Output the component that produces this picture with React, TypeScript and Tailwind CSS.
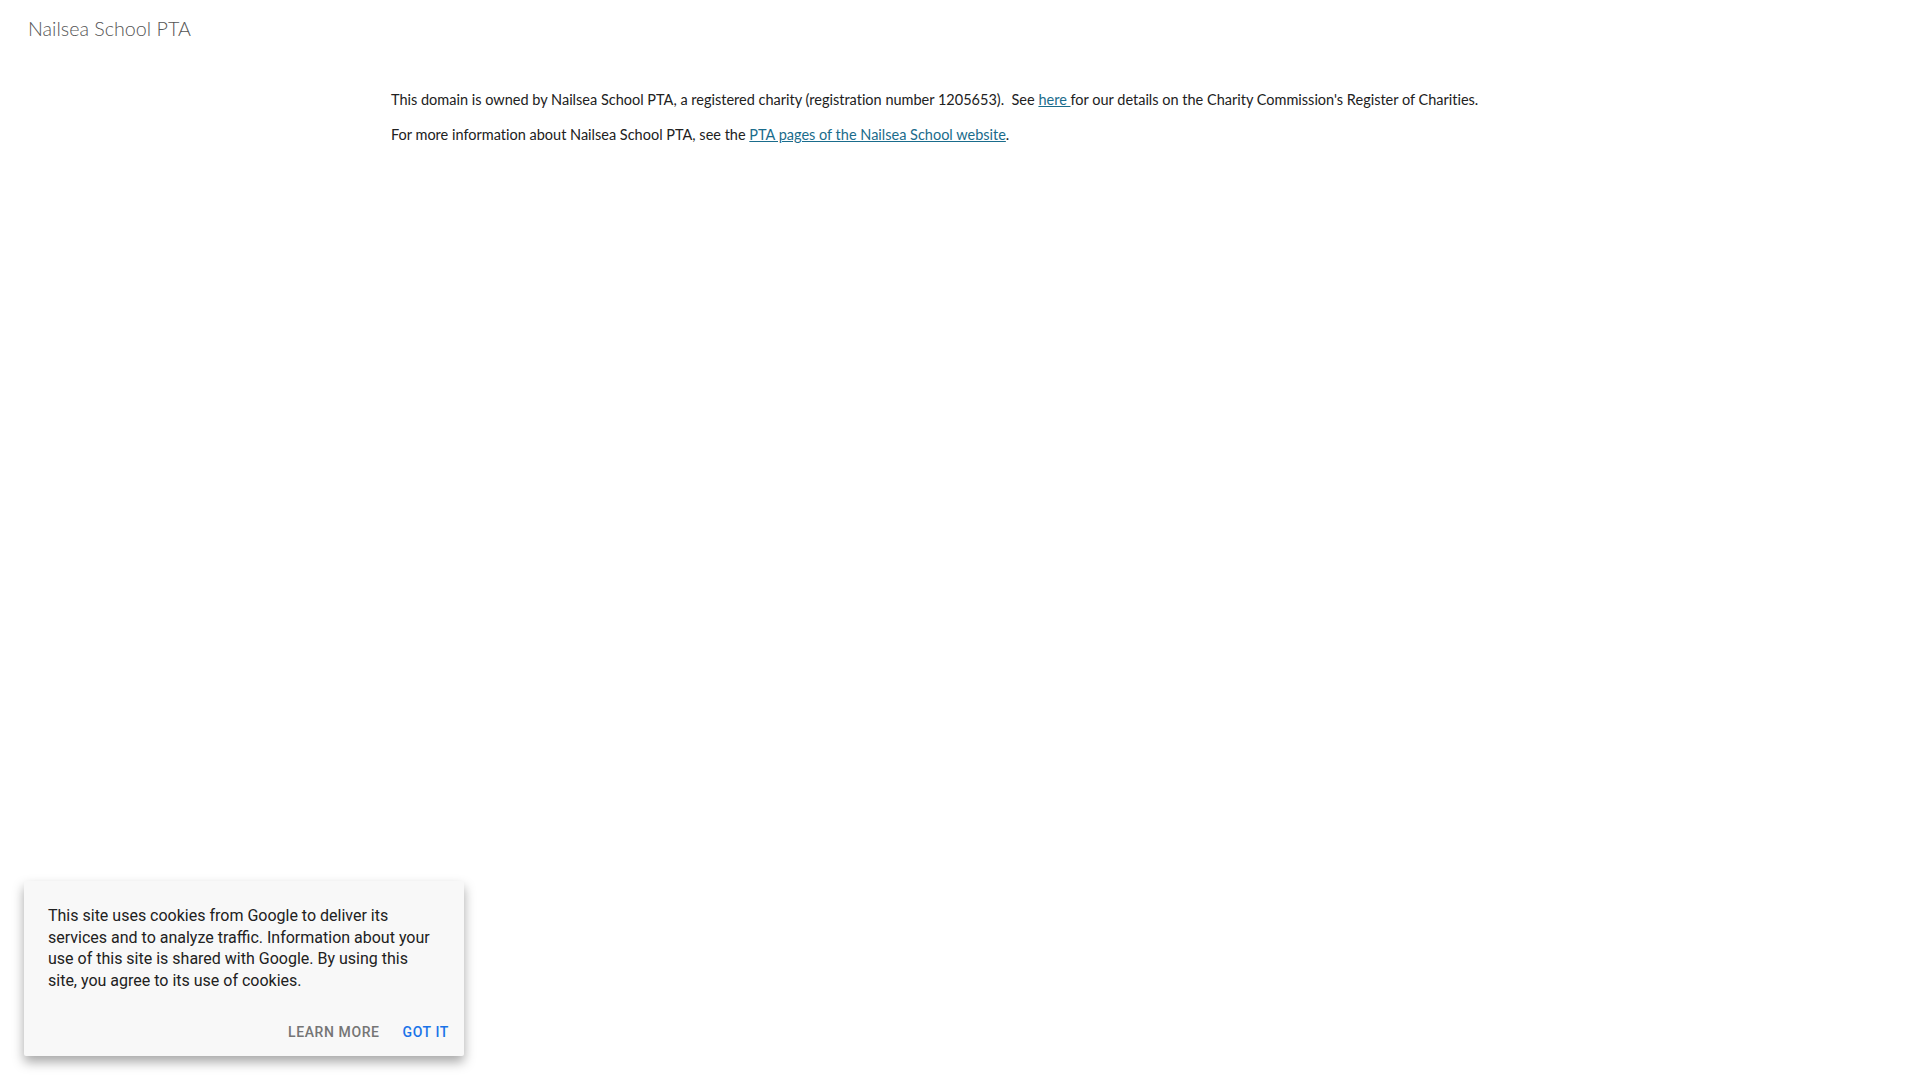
import React from "react";

export default function App() {
  return (
    <div className="relative w-[1920px] h-[1080px] bg-white overflow-hidden" style={{ fontFamily: "Lato, 'Liberation Sans', sans-serif" }}>
      <header className="h-[58px] flex items-center pl-[28px]">
        <span className="text-[19.7px] font-light text-[#555555] leading-none">Nailsea School PTA</span>
      </header>
      <main className="ml-[391px] w-[1140px] pt-[32px] text-[14.5px] leading-[20px] text-[#212121] [font-variant-ligatures:none]">
        <p className="mb-[15px]">
          This domain is owned by Nailsea School PTA, a registered charity (registration number 1205653).&nbsp; See{" "}
          <a className="text-[#1a6c8c] underline" href="#">here </a>
          for our details on the Charity Commission's Register of Charities.
        </p>
        <p>
          For more information about Nailsea School PTA, see the{" "}
          <a className="text-[#1a6c8c] underline" href="#">PTA pages of the Nailsea School website</a>.
        </p>
      </main>
      <div
        className="absolute left-[24px] bottom-[24px] w-[440px] bg-[#f8f8f8] rounded-[2px] shadow-[0_6px_12px_rgba(0,0,0,0.35)]"
        style={{ fontFamily: "Roboto, 'Liberation Sans', sans-serif" }}
      >
        <div className="px-[24px] pt-[24px] text-[16px] leading-[21.4px] text-[#212121]">
          This site uses cookies from Google to deliver its services and to analyze traffic. Information about your use of this site is shared with Google. By using this site, you agree to its use of cookies.
        </div>
        <div className="flex justify-end items-center gap-[23px] pr-[15px] pt-[31px] pb-[13px]">
          <span className="text-[14px] font-medium tracking-[0.6px] text-[#757575]">LEARN MORE</span>
          <span className="text-[14px] font-medium tracking-[0.6px] text-[#1a73e8]">GOT IT</span>
        </div>
      </div>
    </div>
  );
}
